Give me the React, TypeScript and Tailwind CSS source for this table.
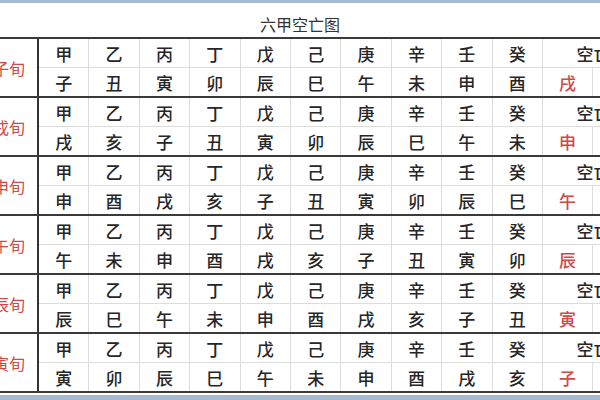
import React from "react";

const stems = ["甲", "乙", "丙", "丁", "戊", "己", "庚", "辛", "壬", "癸"];
const groups: { label: string; branches: string[]; empty: [string, string] }[] = [
  { label: "甲子旬", branches: ["子", "丑", "寅", "卯", "辰", "巳", "午", "未", "申", "酉"], empty: ["戌", "亥"] },
  { label: "甲戌旬", branches: ["戌", "亥", "子", "丑", "寅", "卯", "辰", "巳", "午", "未"], empty: ["申", "酉"] },
  { label: "甲申旬", branches: ["申", "酉", "戌", "亥", "子", "丑", "寅", "卯", "辰", "巳"], empty: ["午", "未"] },
  { label: "甲午旬", branches: ["午", "未", "申", "酉", "戌", "亥", "子", "丑", "寅", "卯"], empty: ["辰", "巳"] },
  { label: "甲辰旬", branches: ["辰", "巳", "午", "未", "申", "酉", "戌", "亥", "子", "丑"], empty: ["寅", "卯"] },
  { label: "甲寅旬", branches: ["寅", "卯", "辰", "巳", "午", "未", "申", "酉", "戌", "亥"], empty: ["子", "丑"] },
];

export default function App() {
  return (
    <div
      className="w-[600px] h-[400px] overflow-hidden bg-white flex flex-col text-[#262626]"
      style={{ fontFamily: '"Noto Sans CJK SC", "Noto Sans", sans-serif' }}
    >
      <div className="h-[3px] shrink-0 bg-[#a5bad0]" />
      <div className="h-[34px] shrink-0 flex items-center justify-center pt-[7px] text-[16px] leading-none text-[#333]">
        六甲空亡图
      </div>
      {groups.map((g) => (
        <div key={g.label} className="flex shrink-0 border-t-2 border-[#3a3a3a]">
          <div className="w-[39px] shrink-0 border-r-2 border-[#333] overflow-hidden flex items-center justify-end pr-[12px] text-[16px] leading-none text-[#d04848] whitespace-nowrap">
            {g.label}
          </div>
          <div className="grid grid-cols-[repeat(10,50.4px)_50px_51px] grid-rows-[29px_28px] shrink-0 text-[17px] leading-none font-medium">
            {stems.map((s) => (
              <div key={"s" + s} className="border-r border-b border-[#dcdcdc] flex items-center justify-center">
                {s}
              </div>
            ))}
            <div className="col-span-2 border-b border-[#dcdcdc] flex items-center justify-center whitespace-nowrap">空亡</div>
            {g.branches.map((b, i) => (
              <div key={"b" + i} className="border-r border-[#dcdcdc] flex items-center justify-center">
                {b}
              </div>
            ))}
            <div className="border-r border-[#dcdcdc] flex items-center justify-center text-[#d04848]">{g.empty[0]}</div>
            <div className="flex items-center justify-center text-[#d04848]">{g.empty[1]}</div>
          </div>
        </div>
      ))}
      <div className="h-[2px] shrink-0 bg-[#3a3a3a]" />
      <div className="h-[2px] shrink-0 bg-white" />
      <div className="flex-1 bg-[#a5bad0]" />
    </div>
  );
}
